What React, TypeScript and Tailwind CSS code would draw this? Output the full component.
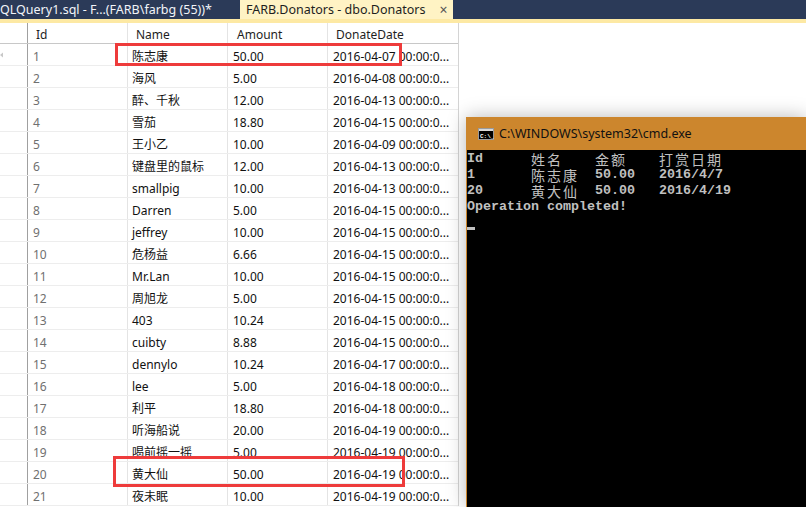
import React from 'react'

const rows: [string, string, string, string][] = [
  ['1', '陈志康', '50.00', '2016-04-07'],
  ['2', '海风', '5.00', '2016-04-08'],
  ['3', '醉、千秋', '12.00', '2016-04-13'],
  ['4', '雪茄', '18.80', '2016-04-15'],
  ['5', '王小乙', '10.00', '2016-04-09'],
  ['6', '键盘里的鼠标', '12.00', '2016-04-13'],
  ['7', 'smallpig', '10.00', '2016-04-13'],
  ['8', 'Darren', '5.00', '2016-04-15'],
  ['9', 'jeffrey', '10.00', '2016-04-15'],
  ['10', '危杨益', '6.66', '2016-04-15'],
  ['11', 'Mr.Lan', '10.00', '2016-04-15'],
  ['12', '周旭龙', '5.00', '2016-04-15'],
  ['13', '403', '10.24', '2016-04-15'],
  ['14', 'cuibty', '8.88', '2016-04-15'],
  ['15', 'dennylo', '10.24', '2016-04-17'],
  ['16', 'lee', '5.00', '2016-04-18'],
  ['17', '利平', '18.80', '2016-04-18'],
  ['18', '听海船说', '20.00', '2016-04-19'],
  ['19', '喝前摇一摇', '5.00', '2016-04-19'],
  ['20', '黄大仙', '50.00', '2016-04-19'],
  ['21', '夜未眠', '10.00', '2016-04-19'],
]

const uiFont = "font-['Noto_Sans','Noto_Sans_CJK_SC',sans-serif]"
const cols = 'grid grid-cols-[28px_100px_100px_100px_130px]'

function TabBar() {
  return (
    <div>
      <div className="flex h-[19px] bg-[#2b3a58] text-[12.5px] leading-[19px]">
        <div className="w-[240px] text-[#f2f4f8] whitespace-nowrap overflow-hidden">
          QLQuery1.sql - F...(FARB\farbg (55))*
        </div>
        <div className="w-[213px] bg-[#fff3c4] pl-[6px] flex items-center text-[#1e1e1e] whitespace-nowrap">
          <span>FARB.Donators - dbo.Donators</span>
          <span className="ml-[14px] text-[#555] text-[14px]">×</span>
        </div>
      </div>
      <div className="h-[4px] bg-[#fde9a4]" />
    </div>
  )
}

function Grid() {
  return (
    <div className="w-[459px] border-r border-[#d4d4d4] text-[12px]">
      <div className={`${cols} h-[21px] border-b border-[#c8c8c8] text-[#1e1e1e] leading-[17px]`}>
        <div className="border-r border-[#a0a0a0]" />
        <div className="border-r border-[#e4e4e4] pl-[8px] pt-[3px]">Id</div>
        <div className="border-r border-[#e4e4e4] pl-[8px] pt-[3px]">Name</div>
        <div className="border-r border-[#e4e4e4] pl-[9px] pt-[3px]">Amount</div>
        <div className="pl-[8px] pt-[3px]">DonateDate</div>
      </div>
      {rows.map(([id, name, amount, date]) => (
        <div key={id} className={`${cols} h-[22px] border-b border-[#ededed] leading-[17px]`}>
          <div className="border-r border-[#a0a0a0] relative">
            {id === '1' && (
              <svg className="absolute left-0 top-[8px]" width="4" height="6" viewBox="0 0 4 6">
                <path d="M0 3 L3 0.5 L3 5.5 Z" fill="#c8c8c8" />
              </svg>
            )}
          </div>
          <div className="border-r border-[#e4e4e4] pl-[5px] pt-[4px] text-[#707070]">{id}</div>
          <div className="border-r border-[#e4e4e4] pl-[4px] pt-[4px] text-[#111] whitespace-nowrap overflow-hidden">{name}</div>
          <div className="border-r border-[#e4e4e4] pl-[5px] pt-[4px] text-[#111]">{amount}</div>
          <div className="pl-[5px] pt-[4px] text-[#111] whitespace-nowrap overflow-hidden">{date} 00:00:0...</div>
        </div>
      ))}
    </div>
  )
}

function CmdIcon() {
  return (
    <svg width="16" height="12" viewBox="0 0 16 12">
      <rect x="0.5" y="0.5" width="15" height="11" fill="#000" stroke="#9a9a9a" />
      <rect x="1" y="1" width="14" height="2" fill="#d8d8d8" />
      <text x="2" y="9.5" fontSize="6" fill="#fff" fontFamily="Liberation Mono, monospace" fontWeight="bold">C:\_</text>
    </svg>
  )
}

const cjk = "font-['Noto_Sans_CJK_SC',sans-serif] text-[14px] leading-[16px] tracking-[2px] font-normal"

function CmdLine({ cells }: { cells: { t: string; c?: boolean }[] }) {
  return (
    <div className="flex h-[16px] leading-[16px]">
      {cells.map((cell, i) => (
        <div key={i} className={`w-[64px] shrink-0 whitespace-pre ${cell.c ? cjk : ''}`}>
          {cell.t}
        </div>
      ))}
    </div>
  )
}

function CmdWindow() {
  return (
    <div className="absolute left-[466px] top-[117px] right-0 bottom-0 flex flex-col border-l border-[#cc862d] shadow-[0_0_18px_rgba(0,0,0,0.28)]">
      <div className={`h-[33px] bg-[#cc862d] flex items-center pl-[11px] pt-[1px] gap-[5px] text-[12.5px] text-[#111] ${uiFont}`}>
        <CmdIcon />
        <span>C:\WINDOWS\system32\cmd.exe</span>
      </div>
      <div className="flex-1 bg-black pt-[1px] text-[#c0c0c0] font-['Liberation_Mono',monospace] font-bold text-[13.33px]">
        <CmdLine cells={[{ t: 'Id' }, { t: '姓名', c: true }, { t: '金额', c: true }, { t: '打赏日期', c: true }]} />
        <CmdLine cells={[{ t: '1' }, { t: '陈志康', c: true }, { t: '50.00' }, { t: '2016/4/7' }]} />
        <CmdLine cells={[{ t: '20' }, { t: '黄大仙', c: true }, { t: '50.00' }, { t: '2016/4/19' }]} />
        <div className="h-[16px] leading-[16px] whitespace-pre">Operation completed!</div>
        <div className="h-[16px] flex items-end pb-[1px]">
          <div className="w-[8px] h-[3px] bg-[#c0c0c0]" />
        </div>
      </div>
    </div>
  )
}

export default function App() {
  return (
    <div className={`w-[806px] h-[507px] relative overflow-hidden bg-white ${uiFont}`}>
      <TabBar />
      <Grid />
      {/* red highlight boxes drawn on the screenshot */}
      <div className="absolute left-[115px] top-[43px] w-[287px] h-[23px] border-[3px] border-[#ee3b3b]" />
      <div className="absolute left-[113px] top-[456px] w-[292px] h-[31px] border-[3px] border-[#ee3b3b]" />
      <CmdWindow />
    </div>
  )
}
